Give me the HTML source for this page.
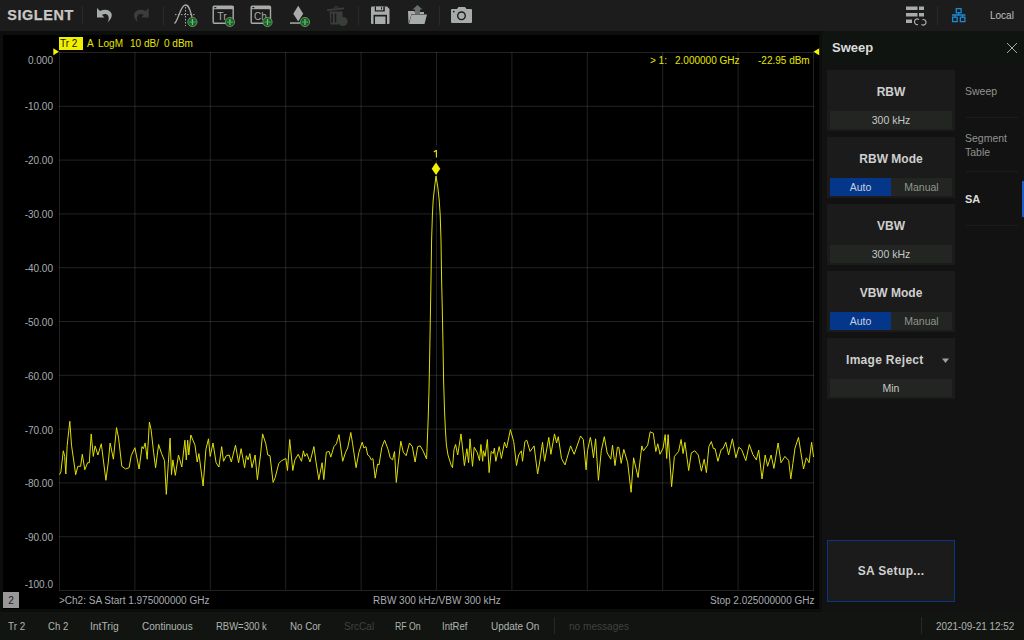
<!DOCTYPE html>
<html><head><meta charset="utf-8">
<style>
*{margin:0;padding:0;box-sizing:border-box}
html,body{width:1024px;height:640px;overflow:hidden;background:#0b0e0b;font-family:"Liberation Sans",sans-serif}
.abs{position:absolute}
#top{left:0;top:0;width:1024px;height:31px;background:#1c1c1c}
#plot{left:3px;top:35px;width:816px;height:574px;background:#000}
#panel{left:822px;top:63px;width:202px;height:549px;background:#121212}
#phead{left:822px;top:31px;width:202px;height:32px;background:#101410}
#status{left:0;top:612px;width:1024px;height:28px;background:#111411}
.t{position:absolute;white-space:nowrap;line-height:1}
.yl{color:#a8acb0;font-size:10px;text-align:right;width:50px;left:3px}
.st{color:#b0b4b0;font-size:11px;top:621px;transform-origin:0 0}
.btn{position:absolute;left:827px;width:128px;height:61px;background:#1b1b1b}
.btn .ttl{position:absolute;left:0;width:128px;text-align:center;color:#cfcfcf;font-weight:bold;font-size:12px;top:16px;line-height:1}
.val{position:absolute;left:3px;top:41px;width:122px;height:18px;background:#222522;color:#c8c8c8;font-size:10.5px;text-align:center;line-height:18px}
.tab{position:absolute;left:965px;color:#909290;font-size:10.5px;line-height:1}
.sep{position:absolute;left:966px;width:52px;height:1px;background:#1c1c1c}
</style></head><body>
<div id="top" class="abs"></div>
<div id="plot" class="abs"></div>
<div id="panel" class="abs"></div>
<div id="phead" class="abs"></div>
<div id="status" class="abs"></div>


<!-- header logo -->
<svg class="abs" style="left:0;top:0" width="1024" height="31">
 <text x="7.2" y="20" textLength="66" lengthAdjust="spacing" font-family="Liberation Sans" font-weight="bold" font-size="14.4" fill="#c8c8c4" stroke="#c8c8c4" stroke-width="0.25">SIGLENT</text>
 <g fill="#2a2a2a"><rect x="82" y="6" width="1" height="18"/><rect x="163" y="6" width="1" height="19"/><rect x="358" y="6" width="1" height="19"/><rect x="439" y="6" width="1" height="19"/><rect x="937" y="6" width="1" height="19"/></g>
 <path id="undo" d="M97 8 L97 17.5 L104.5 17.5 L102 15 C104 13.5 107 13.8 108 15.5 C109.5 18 108.5 21 107.5 22.5 C110.5 20 112.5 16.5 111.5 13.5 C110 9.5 104.5 8.5 100 11 Z" fill="#a8aca8"/>
 <path d="M97 8 L97 17.5 L104.5 17.5 L102 15 C104 13.5 107 13.8 108 15.5 C109.5 18 108.5 21 107.5 22.5 C110.5 20 112.5 16.5 111.5 13.5 C110 9.5 104.5 8.5 100 11 Z" fill="#3a3e3a" transform="matrix(-1 0 0 1 245.7 0)"/>
 <!-- marker add -->
 <path d="M174.5 23.5 C178.5 20 180.5 5 185.5 5 C189.5 5 190.5 12 192 17" fill="none" stroke="#a8aca8" stroke-width="1.3"/>
 <path d="M185.5 7V26M175 14.6H196" stroke="#a8aca8" stroke-width="1" stroke-dasharray="1.5 1.5"/>
 <!-- Tr window -->
 <rect x="213.2" y="6.2" width="20" height="17" rx="1" fill="none" stroke="#a8aca8" stroke-width="1.4"/>
 <rect x="213" y="6" width="20.5" height="3.2" fill="#a8aca8"/>
 <rect x="214.3" y="7" width="2" height="1.2" fill="#1b1b1b"/>
 <text x="217.3" y="19.5" font-family="Liberation Sans" font-size="10.5" fill="#a8aca8">Tr</text>
 <!-- Ch window -->
 <rect x="251.2" y="6.2" width="19.3" height="17" rx="1" fill="none" stroke="#a8aca8" stroke-width="1.4"/>
 <rect x="251" y="6" width="19.8" height="3.2" fill="#a8aca8"/>
 <rect x="252.3" y="7" width="2" height="1.2" fill="#1b1b1b"/>
 <text x="254" y="19.5" font-family="Liberation Sans" font-size="10" fill="#a8aca8">Ch</text>
 <!-- marker diamond -->
 <path d="M298.2 5.8 L303.2 13.8 L298.2 21.5 L293.3 13.8Z" fill="#a8aca8"/>
 <rect x="290" y="22.3" width="10" height="1.5" fill="#a8aca8"/>
 <!-- green plus circles -->
 <g stroke="#8a9a8a" stroke-width="0.8" fill="#0a6a1a">
  <circle cx="192.4" cy="22" r="4.6"/><circle cx="229.9" cy="22" r="4.6"/><circle cx="267.5" cy="22" r="4.6"/><circle cx="305" cy="22" r="4.6"/>
 </g>
 <g fill="#9aaa9a">
  <rect x="191.8" y="19" width="1.2" height="6"/><rect x="229.3" y="19" width="1.2" height="6"/><rect x="266.9" y="19" width="1.2" height="6"/><rect x="304.4" y="19" width="1.2" height="6"/>
 </g>
 <g fill="#6a9a6a">
  <rect x="189.5" y="21.5" width="6" height="1.1"/><rect x="227" y="21.5" width="6" height="1.1"/><rect x="264.6" y="21.5" width="6" height="1.1"/><rect x="302.1" y="21.5" width="6" height="1.1"/>
 </g>
 <!-- trash (dim) -->
 <g fill="#3a3e3a">
  <path d="M327 9.3 L344 7.5 L344.3 9.3 L327.3 11.1Z"/>
  <path d="M333.5 7.8 C334 6 337.5 5.5 339.5 7.3Z"/>
  <path d="M329.5 11.5 H342.5 V18 A5 5 0 0 0 339 24.5 H330.5Z"/>
  <circle cx="343" cy="21.5" r="4.6"/>
 </g>
 <g fill="#1b1b1b"><rect x="331.3" y="13.5" width="1.5" height="9"/><rect x="334.8" y="13.5" width="1.5" height="9"/></g>
 <!-- save -->
 <path d="M372 6.5 H387 L389.5 9 V23 A1 1 0 0 1 388.5 24 H372 A1 1 0 0 1 371 23 V7.5 A1 1 0 0 1 372 6.5Z" fill="#a8aca8"/>
 <rect x="374.8" y="6.5" width="10" height="5" fill="#1b1b1b"/>
 <rect x="376" y="6.5" width="7.3" height="3.8" fill="#a8aca8"/>
 <rect x="381" y="7.2" width="1" height="2.2" fill="#1b1b1b"/>
 <rect x="373.5" y="14.8" width="13.5" height="9.2" fill="#1b1b1b"/>
 <rect x="375" y="16.5" width="10.5" height="7.5" fill="#a8aca8"/>
 <!-- folder -->
 <path d="M408 11 H414 L415 12 H424 V14 H411.5 L408.5 24Z" fill="#a8aca8"/>
 <path d="M411.5 14.5 H427 L424.5 24 H409Z" fill="#a8aca8"/>
 <path d="M417.5 5 L422.5 9.5 H420 V14 H415 V9.5 H412.5Z" fill="#6a6e6a"/>
 <!-- camera -->
 <path d="M452 9 H457 L458.5 7 H465 L466.5 9 H471 A1 1 0 0 1 472 10 V22 A1 1 0 0 1 471 23 H452 A1 1 0 0 1 451 22 V10 A1 1 0 0 1 452 9Z" fill="#a8aca8"/>
 <circle cx="461.5" cy="15.8" r="3.8" fill="none" stroke="#1b1b1b" stroke-width="1.4"/>
 <circle cx="453.8" cy="11.6" r="0.9" fill="#1b1b1b"/>
 <!-- table icon -->
 <g fill="#a8aca8">
  <rect x="906" y="6.5" width="11.5" height="3.5"/><rect x="919" y="6.5" width="5" height="3.5"/>
  <rect x="906" y="13" width="11.5" height="3.5"/><rect x="919" y="13" width="5" height="3.5"/>
  <rect x="906" y="19.5" width="6" height="3.5"/>
 </g>
 <path d="M918 24.5 A2.8 2.8 0 1 1 919 19.6 M922.5 19.6 A2.8 2.8 0 1 1 921.5 24.5" fill="none" stroke="#a8aca8" stroke-width="1.2"/>
 <!-- network -->
 <g fill="none" stroke="#1a8ad4" stroke-width="1.3">
  <rect x="956.3" y="8.6" width="4.8" height="4.2"/>
  <rect x="952.6" y="17.2" width="4.6" height="4.4"/>
  <rect x="960.3" y="17.2" width="4.6" height="4.4"/>
  <path d="M958.7 12.8V15M952 15H965.5M954.9 15V17.2M962.6 15V17.2"/>
 </g>
</svg>

<!-- grid -->
<svg class="abs" style="left:0;top:0" width="1024" height="640">
 <g stroke="#fff" stroke-opacity="0.135" stroke-width="1">
  <path d="M59.5 52V590M134.9 52V590M210.3 52V590M285.7 52V590M361.1 52V590M436.5 52V590M511.9 52V590M587.3 52V590M662.7 52V590M738.1 52V590M813.5 52V590"/>
  <path d="M59 52.5H814M59 106.3H814M59 160.1H814M59 213.9H814M59 267.7H814M59 321.5H814M59 375.3H814M59 429.1H814M59 482.9H814M59 536.7H814M59 590.5H814"/>
 </g>
 <path d="M59.5 474.7 60.9 471.9 63.3 450.8 64.7 456.4 65.8 474.0 67.2 445.2 69.8 421.3 71.5 445.2 75.7 474.7 77.8 466.3 80.6 466.3 82.3 454.3 84.8 469.8 87.6 462.7 89.3 462.7 91.2 433.9 93.3 456.4 95.1 445.9 97.9 455.0 101.3 443.8 105.9 480.3 108.3 462.0 110.1 443.0 113.4 459.2 116.5 427.6 118.6 438.1 121.8 466.3 125.6 469.0 129.1 467.7 131.2 455.7 134.9 447.7 139.1 469.0 142.0 446.6 143.4 448.7 145.2 443.0 147.2 459.2 149.4 422.0 151.1 429.7 153.6 452.2 155.6 467.7 158.6 444.5 161.6 453.6 164.5 460.6 166.3 494.4 168.3 463.4 170.1 438.1 171.5 474.7 172.9 459.9 175.3 475.4 178.5 455.0 181.8 467.0 184.9 440.2 186.3 459.9 187.7 440.2 188.8 455.0 190.8 435.0 195.0 445.2 197.2 462.0 198.9 453.6 203.1 486.0 205.9 449.4 208.5 438.8 210.2 456.4 213.0 443.0 216.1 462.7 218.9 467.0 221.7 446.6 223.5 461.3 226.3 455.7 229.2 455.0 231.3 462.0 235.5 445.2 238.6 462.7 241.1 448.7 244.6 467.7 246.4 455.7 248.1 459.9 249.9 453.6 252.0 467.7 255.1 455.0 257.4 479.6 260.5 455.0 262.6 433.9 265.8 443.8 267.8 455.0 270.0 455.7 273.1 482.4 275.2 477.5 278.8 463.4 281.8 460.6 285.8 458.5 287.5 470.5 289.7 439.5 292.8 470.5 294.9 459.9 298.2 454.3 301.5 461.3 303.4 450.8 304.8 456.4 306.9 453.6 310.0 462.0 313.9 446.6 316.0 462.0 318.8 479.6 322.1 462.7 323.8 479.6 326.3 452.2 329.1 451.5 330.8 457.1 333.9 446.6 336.4 443.8 339.0 434.6 342.7 461.3 345.6 452.2 347.7 448.0 350.8 432.5 352.6 443.8 356.1 467.7 358.9 452.2 362.2 442.2 363.9 448.0 365.9 446.6 367.7 455.0 369.6 456.4 371.3 459.9 372.9 458.5 375.2 478.2 377.6 464.1 379.0 464.9 381.8 447.3 384.6 440.2 388.1 449.4 390.2 457.8 392.6 459.9 394.5 451.5 396.3 482.4 398.0 465.6 400.8 441.2 403.3 452.2 406.1 455.7 409.5 443.0 412.3 446.6 415.1 462.0 417.7 446.6 420.2 445.9 423.0 450.8 426.6 459.0 427.6 434.0 428.2 418.0 429.0 390.0 429.6 360.0 430.3 320.0 431.0 280.0 431.6 240.0 432.4 215.0 433.2 200.0 434.6 187.0 436.0 176.0 437.8 187.0 439.2 200.0 440.2 215.0 441.0 240.0 441.6 280.0 442.3 310.0 443.0 345.0 443.6 380.0 444.5 410.0 445.4 430.0 446.4 445.0 448.0 455.0 451.2 465.3 452.5 467.7 454.0 449.4 455.6 444.5 457.7 455.0 461.0 433.9 464.4 465.6 466.9 448.7 468.6 462.7 470.0 438.8 472.5 466.3 474.2 447.3 477.1 452.2 479.5 460.6 480.9 444.5 482.7 461.3 483.4 450.8 485.1 456.4 487.4 439.5 489.1 472.6 491.2 451.5 493.3 453.6 494.4 448.0 495.8 461.3 499.2 446.6 501.4 458.5 504.5 442.3 506.6 448.0 510.4 429.7 513.7 441.6 516.5 465.6 518.6 455.0 521.4 450.8 522.5 461.3 524.9 441.6 526.8 440.2 530.1 451.5 534.1 445.9 537.6 474.0 539.7 462.0 542.5 442.3 544.6 461.3 548.8 437.4 550.9 454.3 554.5 433.9 556.6 443.0 558.3 436.7 561.5 458.5 565.0 464.9 570.6 445.9 574.2 454.3 580.5 436.0 583.3 439.5 586.1 469.8 587.5 450.8 590.3 437.4 591.4 442.3 593.5 457.8 595.6 438.8 598.4 480.3 601.3 450.8 604.3 436.7 607.2 452.9 610.8 459.2 612.5 445.2 615.0 465.6 617.4 447.3 618.8 447.3 621.2 463.4 623.8 449.4 627.7 462.7 631.1 492.3 633.6 457.8 638.1 477.5 641.8 445.9 643.4 450.8 647.7 445.2 650.2 431.8 653.3 433.2 655.8 451.5 657.8 443.8 660.0 454.3 663.1 448.0 665.2 434.6 666.7 458.5 668.1 434.6 671.6 486.7 674.4 456.4 678.6 451.5 681.1 439.5 683.1 453.6 684.9 442.3 688.7 470.5 691.3 452.9 694.8 450.8 698.3 455.0 701.4 471.2 704.2 459.2 706.4 472.6 708.9 446.6 711.3 441.6 713.4 448.7 715.1 448.7 717.9 461.3 721.2 449.4 723.0 448.7 725.8 442.3 728.6 455.0 732.4 438.8 735.9 457.8 738.8 447.3 741.6 449.4 745.8 460.6 749.3 444.5 752.8 454.3 756.3 459.9 758.7 450.1 762.0 478.9 765.2 455.0 767.6 466.3 771.1 455.0 773.9 468.4 778.1 443.0 781.0 462.7 784.9 456.4 788.7 460.6 790.8 478.9 792.9 463.4 795.0 448.0 798.5 437.4 803.5 469.0 806.3 457.8 809.1 462.7 811.6 442.3 813.6 457.1" fill="none" stroke="#e0e000" stroke-width="1" stroke-linejoin="round"/>
 <rect x="432" y="146.5" width="8" height="14" fill="#000"/>
 <polygon points="436,162.5 440.3,168.7 436,175 431.7,168.7" fill="#f0f000"/>
 <path d="M436.4 157.6V150M436.4 150.2L433.8 152" stroke="#e6e600" stroke-width="1.15" fill="none"/>
 <polygon points="53.3,48.3 59,51.8 53.3,55.2" fill="#f5f500"/>
 <polygon points="819.2,48.3 813.5,51.8 819.2,55.2" fill="#f5f500"/>
</svg>

<div class="t" style="left:59px;top:37px;width:24px;height:13px;background:#f0f000"></div>
<div class="t" style="left:60px;top:39px;color:#1a1a00;font-size:10px">Tr 2</div>
<div class="t" style="left:87px;top:39px;color:#e6e600;font-size:10px">A</div>
<div class="t" style="left:98px;top:39px;color:#e6e600;font-size:10px">LogM</div>
<div class="t" style="left:130px;top:39px;color:#e6e600;font-size:10px">10 dB/</div>
<div class="t" style="left:164px;top:39px;color:#e6e600;font-size:10px">0 dBm</div>

<div class="t" style="left:650px;top:56px;color:#e6e600;font-size:10px">&gt; 1:</div>
<div class="t" style="left:675px;top:56px;color:#e6e600;font-size:10px">2.000000 GHz</div>
<div class="t" style="left:758px;top:56px;color:#e6e600;font-size:10px">-22.95 dBm</div>

<!-- y labels -->
<div class="t yl" style="top:56px">0.000</div>
<div class="t yl" style="top:102px">-10.00</div>
<div class="t yl" style="top:156px">-20.00</div>
<div class="t yl" style="top:210px">-30.00</div>
<div class="t yl" style="top:264px">-40.00</div>
<div class="t yl" style="top:318px">-50.00</div>
<div class="t yl" style="top:372px">-60.00</div>
<div class="t yl" style="top:426px">-70.00</div>
<div class="t yl" style="top:479px">-80.00</div>
<div class="t yl" style="top:533px">-90.00</div>
<div class="t yl" style="top:580px">-100.0</div>

<div class="t" style="left:3px;top:592px;width:16px;height:16px;background:#989898;color:#202020;font-size:10px;text-align:center;line-height:18px">2</div>
<div class="t" style="left:59px;top:596px;color:#a8acb0;font-size:10px">&gt;Ch2: SA Start 1.975000000 GHz</div>
<div class="t" style="left:373px;top:596px;color:#a8acb0;font-size:10px">RBW 300 kHz/VBW 300 kHz</div>
<div class="t" style="left:710px;top:596px;color:#a8acb0;font-size:10px">Stop 2.025000000 GHz</div>

<!-- status -->
<div class="t st" style="left:8px;transform:scaleX(0.895)">Tr 2</div>
<div class="t st" style="left:48px;transform:scaleX(0.870)">Ch 2</div>
<div class="t st" style="left:90px;transform:scaleX(0.935)">IntTrig</div>
<div class="t st" style="left:142px;transform:scaleX(0.911)">Continuous</div>
<div class="t st" style="left:216px;transform:scaleX(0.861)">RBW=300 k</div>
<div class="t st" style="left:290px;transform:scaleX(0.886)">No Cor</div>
<div class="t st" style="left:343.6px;color:#3e423e;transform:scaleX(0.913)">SrcCal</div>
<div class="t st" style="left:394.5px;transform:scaleX(0.791)">RF On</div>
<div class="t st" style="left:442px;transform:scaleX(0.867)">IntRef</div>
<div class="t st" style="left:491px;transform:scaleX(0.906)">Update On</div>
<div class="abs" style="left:554px;top:617px;width:1px;height:17px;background:#262826"></div>
<div class="t st" style="left:569px;color:#3e423e;transform:scaleX(0.916)">no messages</div>
<div class="abs" style="left:921px;top:617px;width:1px;height:17px;background:#262826"></div>
<div class="t st" style="left:936px;transform:scaleX(0.901)">2021-09-21 12:52</div>

<!-- panel -->
<div class="t" style="left:832px;top:41px;color:#dcdcdc;font-size:13px;font-weight:bold">Sweep</div>
<svg class="abs" style="left:1006px;top:42px" width="12" height="12"><path d="M1 1L11 11M11 1L1 11" stroke="#a8a8a8" stroke-width="1"/></svg>

<div class="btn" style="top:70px"><div class="ttl">RBW</div><div class="val">300 kHz</div></div>
<div class="btn" style="top:137px"><div class="ttl">RBW Mode</div><div class="val" style="background:#222522"><span style="position:absolute;left:0;top:0;width:61px;height:18px;background:#04368a;color:#c8d0e0">Auto</span><span style="position:absolute;left:61px;top:0;width:61px;height:18px;color:#909490">Manual</span></div></div>
<div class="btn" style="top:204px"><div class="ttl">VBW</div><div class="val">300 kHz</div></div>
<div class="btn" style="top:271px"><div class="ttl">VBW Mode</div><div class="val"><span style="position:absolute;left:0;top:0;width:61px;height:18px;background:#04368a;color:#c8d0e0">Auto</span><span style="position:absolute;left:61px;top:0;width:61px;height:18px;color:#909490">Manual</span></div></div>
<div class="btn" style="top:338px"><div class="ttl" style="left:19px;width:auto;letter-spacing:0.3px">Image Reject</div><svg style="position:absolute;left:115px;top:20px" width="8" height="6"><path d="M0 0.5H7L3.5 5Z" fill="#a0a0a0"/></svg><div class="val">Min</div></div>
<div class="btn" style="top:540px;height:62px;border:1px solid #093584"><div class="ttl" style="top:24px;width:126px;letter-spacing:0.35px">SA Setup...</div></div>

<div class="tab" style="top:86px">Sweep</div>
<div class="sep" style="top:117px"></div>
<div class="tab" style="top:131px;line-height:14px">Segment<br>Table</div>
<div class="sep" style="top:171px"></div>
<div class="tab" style="top:194px;color:#dcdcdc;font-weight:bold;font-size:11px">SA</div>
<div class="abs" style="left:1022px;top:181px;width:2px;height:36px;background:#1a5cc8"></div>
<div class="sep" style="top:225px"></div>

<div class="t" style="left:990px;top:11px;color:#c0c0c0;font-size:10px">Local</div>
</body></html>
